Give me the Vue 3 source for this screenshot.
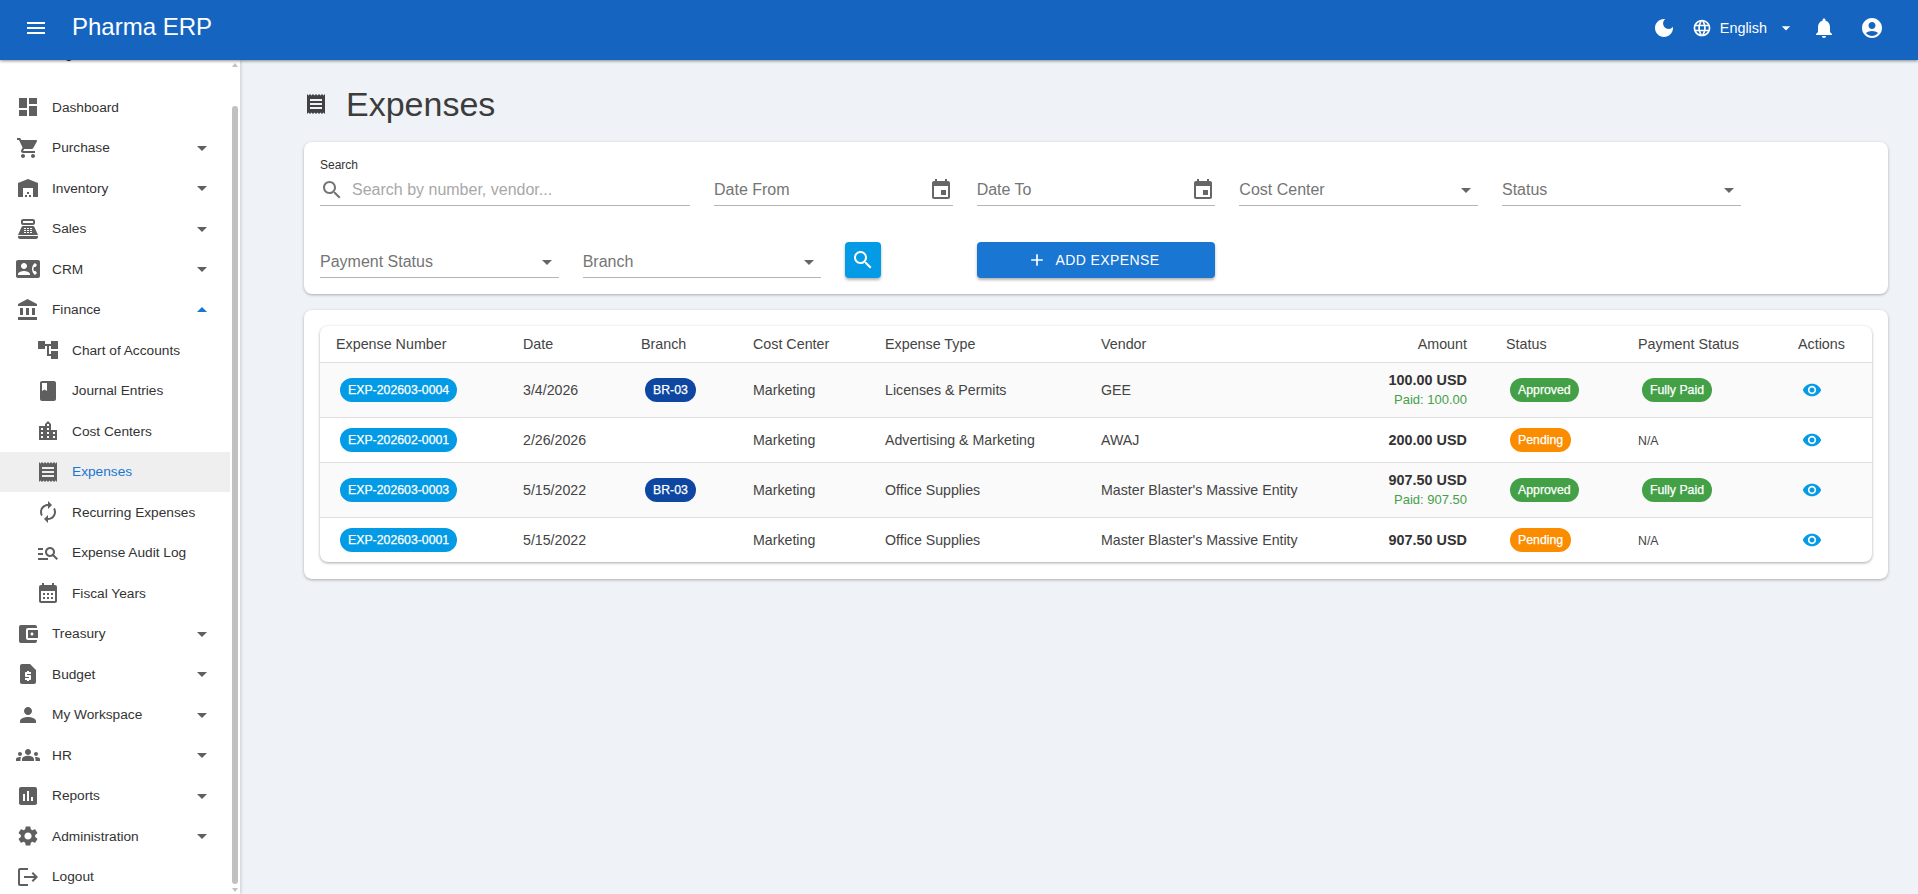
<script setup>
const P = {
  menu: 'M3 18h18v-2H3v2zm0-5h18v-2H3v2zm0-7v2h18V6H3z',
  dashboard: 'M3 13h8V3H3v10zm0 8h8v-6H3v6zm10 0h8V11h-8v10zm0-18v6h8V3h-8z',
  cart: 'M7 18c-1.1 0-1.99.9-1.99 2S5.9 22 7 22s2-.9 2-2-.9-2-2-2zM1 2v2h2l3.6 7.59-1.35 2.45c-.16.28-.25.61-.25.96 0 1.1.9 2 2 2h12v-2H7.42c-.14 0-.25-.11-.25-.25l.03-.12.9-1.63h7.45c.75 0 1.41-.41 1.75-1.03l3.58-6.49c.08-.14.12-.31.12-.48 0-.55-.45-1-1-1H5.21l-.94-2H1zm16 16c-1.1 0-1.99.9-1.99 2s.89 2 1.99 2 2-.9 2-2-.9-2-2-2z',
  warehouse: 'M22 21V7L12 3 2 7v14h5v-9h10v9h5zm-11-2H9v2h2v-2zm2-3h-2v2h2v-2zm2 3h-2v2h2v-2z',
  pos: 'M17 2H7c-1.1 0-2 .9-2 2v2c0 1.1.9 2 2 2h10c1.1 0 2-.9 2-2V4c0-1.1-.9-2-2-2zm0 4H7V4h10v2zm3 16H4c-1.1 0-2-.9-2-2v-1h20v1c0 1.1-.9 2-2 2zM18.53 10.19C18.21 9.47 17.49 9 16.7 9H7.3c-.79 0-1.51.47-1.83 1.19L2 18h20l-3.47-7.81zM8 11h2v1H8zm0 2h2v1H8zm0 2h2v1H8zm3-4h2v1h-2zm0 2h2v1h-2zm0 2h2v1h-2zm3-4h2v1h-2zm0 2h2v1h-2zm0 2h2v1h-2z',
  contact: 'M22 3H2C.9 3 0 3.9 0 5v14c0 1.1.9 2 2 2h20c1.1 0 1.99-.9 1.99-2L24 5c0-1.1-.9-2-2-2zM8 6c1.66 0 3 1.34 3 3s-1.34 3-3 3-3-1.34-3-3 1.34-3 3-3zm6 12H2v-1c0-2 4-3.1 6-3.1s6 1.1 6 3.1v1zm3.85-4h1.64L21 16l-1.99 1.99c-1.31-.98-2.28-2.38-2.73-3.99-.18-.64-.28-1.31-.28-2s.1-1.36.28-2c.45-1.62 1.42-3.01 2.73-3.99L21 8l-1.51 2h-1.64c-.22.63-.35 1.3-.35 2s.13 1.37.35 2z',
  bank: 'M4 10v7h3v-7H4zm6 0v7h3v-7h-3zM2 22h19v-3H2v3zm14-12v7h3v-7h-3zm-4.5-9L2 6v2h19V6l-9.5-5z',
  tree: 'M22 11V3h-7v3H9V3H2v8h7V8h2v10h4v3h7v-8h-7v3h-2V8h2v3z',
  book: 'M18 2H6c-1.1 0-2 .9-2 2v16c0 1.1.9 2 2 2h12c1.1 0 2-.9 2-2V4c0-1.1-.9-2-2-2zM6 4h5v8l-2.5-1.5L6 12V4z',
  city: 'M15 11V5l-3-3-3 3v2H3v14h18V11h-6zm-8 8H5v-2h2v2zm0-4H5v-2h2v2zm0-4H5V9h2v2zm6 8h-2v-2h2v2zm0-4h-2v-2h2v2zm0-4h-2V9h2v2zm0-4h-2V5h2v2zm6 12h-2v-2h2v2zm0-4h-2v-2h2v2z',
  receipt: 'M18 17H6v-2h12v2zm0-4H6v-2h12v2zm0-4H6V7h12v2zM3 22l1.5-1.5L6 22l1.5-1.5L9 22l1.5-1.5L12 22l1.5-1.5L15 22l1.5-1.5L18 22l1.5-1.5L21 22V2l-1.5 1.5L18 2l-1.5 1.5L15 2l-1.5 1.5L12 2l-1.5 1.5L9 2 7.5 3.5 6 2 4.5 3.5 3 2v20z',
  renew: 'M12 6v3l4-4-4-4v3c-4.42 0-8 3.58-8 8 0 1.57.46 3.03 1.24 4.26L6.7 14.8c-.45-.83-.7-1.79-.7-2.8 0-3.31 2.69-6 6-6zm6.76 1.74L17.3 9.2c.44.84.7 1.79.7 2.8 0 3.31-2.69 6-6 6v-3l-4 4 4 4v-3c4.42 0 8-3.58 8-8 0-1.57-.46-3.03-1.24-4.26z',
  audit: 'M7 9H2V7h5v2zm0 3H2v2h5v-2zm13.59 7l-3.83-3.83c-.8.52-1.74.83-2.76.83-2.76 0-5-2.24-5-5s2.24-5 5-5 5 2.24 5 5c0 1.02-.31 1.96-.83 2.75L22 17.59 20.59 19zM17 11c0-1.65-1.35-3-3-3s-3 1.35-3 3 1.35 3 3 3 3-1.35 3-3zM2 19h10v-2H2v2z',
  calmonth: 'M19 4h-1V2h-2v2H8V2H6v2H5c-1.1 0-2 .9-2 2v14c0 1.1.9 2 2 2h14c1.1 0 2-.9 2-2V6c0-1.1-.9-2-2-2zm0 16H5V10h14v10zM9 14H7v-2h2v2zm4 0h-2v-2h2v2zm4 0h-2v-2h2v2zm-8 4H7v-2h2v2zm4 0h-2v-2h2v2zm4 0h-2v-2h2v2z',
  wallet: 'M21 18v1c0 1.1-.9 2-2 2H5c-1.11 0-2-.9-2-2V5c0-1.1.89-2 2-2h14c1.1 0 2 .9 2 2v1h-9c-1.11 0-2 .9-2 2v8c0 1.1.89 2 2 2h9zm-9-2h10V8H12v8zm4-2.5c-.83 0-1.5-.67-1.5-1.5s.67-1.5 1.5-1.5 1.5.67 1.5 1.5-.67 1.5-1.5 1.5z',
  quote: 'M14 2H6c-1.1 0-1.99.9-1.99 2L4 20c0 1.1.89 2 1.99 2H18c1.1 0 2-.9 2-2V8l-6-6zm1 10h-4v1h3c.55 0 1 .45 1 1v3c0 .55-.45 1-1 1h-1v1h-2v-1H9v-2h4v-1h-3c-.55 0-1-.45-1-1v-3c0-.55.45-1 1-1h1V9h2v1h2v2z',
  person: 'M12 12c2.21 0 4-1.79 4-4s-1.79-4-4-4-4 1.79-4 4 1.79 4 4 4zm0 2c-2.67 0-8 1.34-8 4v2h16v-2c0-2.66-5.33-4-8-4z',
  groups: 'M12 12.75c1.63 0 3.07.39 4.24.9 1.08.48 1.76 1.56 1.76 2.73V18H6v-1.61c0-1.18.68-2.26 1.76-2.73 1.17-.52 2.61-.91 4.24-.91zM4 13c1.1 0 2-.9 2-2s-.9-2-2-2-2 .9-2 2 .9 2 2 2zm1.13 1.1c-.37-.06-.74-.1-1.13-.1-.99 0-1.93.21-2.78.58C.48 14.9 0 15.62 0 16.43V18h4.5v-1.61c0-.83.23-1.61.63-2.29zM20 13c1.1 0 2-.9 2-2s-.9-2-2-2-2 .9-2 2 .9 2 2 2zm4 3.43c0-.81-.48-1.53-1.22-1.85-.85-.37-1.79-.58-2.78-.58-.39 0-.76.04-1.13.1.4.68.63 1.46.63 2.29V18H24v-1.57zM12 6c1.66 0 3 1.34 3 3s-1.34 3-3 3-3-1.34-3-3 1.34-3 3-3z',
  assess: 'M19 3H5c-1.1 0-2 .9-2 2v14c0 1.1.9 2 2 2h14c1.1 0 2-.9 2-2V5c0-1.1-.9-2-2-2zM9 17H7v-7h2v7zm4 0h-2V7h2v10zm4 0h-2v-4h2v4z',
  settings: 'M19.14 12.94c.04-.3.06-.61.06-.94 0-.32-.02-.64-.07-.94l2.03-1.58c.18-.14.23-.41.12-.61l-1.92-3.32c-.12-.22-.37-.29-.59-.22l-2.39.96c-.5-.38-1.03-.7-1.62-.94l-.36-2.54c-.04-.24-.24-.41-.48-.41h-3.84c-.24 0-.43.17-.47.41l-.36 2.54c-.59.24-1.13.57-1.62.94l-2.39-.96c-.22-.08-.47 0-.59.22L2.74 8.87c-.12.21-.08.47.12.61l2.03 1.58c-.05.3-.09.63-.09.94s.02.64.07.94l-2.03 1.58c-.18.14-.23.41-.12.61l1.92 3.32c.12.22.37.29.59.22l2.39-.96c.5.38 1.03.7 1.62.94l.36 2.54c.05.24.24.41.48.41h3.84c.24 0 .44-.17.47-.41l.36-2.54c.59-.24 1.13-.56 1.62-.94l2.39.96c.22.08.47 0 .59-.22l1.92-3.32c.12-.22.07-.47-.12-.61l-2.01-1.58zM12 15.6c-1.98 0-3.6-1.62-3.6-3.6s1.62-3.6 3.6-3.6 3.6 1.62 3.6 3.6-1.62 3.6-3.6 3.6z',
  logout: 'M17 7l-1.41 1.41L18.17 11H8v2h10.17l-2.58 2.58L17 17l5-5zM4 5h8V3H4c-1.1 0-2 .9-2 2v14c0 1.1.9 2 2 2h8v-2H4V5z',
  search: 'M15.5 14h-.79l-.28-.27C15.41 12.59 16 11.11 16 9.5 16 5.91 13.09 3 9.5 3S3 5.91 3 9.5 5.91 16 9.5 16c1.61 0 3.09-.59 4.23-1.57l.27.28v.79l5 4.99L20.49 19l-4.99-5zm-6 0C7.01 14 5 11.99 5 9.5S7.01 5 9.5 5 14 7.01 14 9.5 11.99 14 9.5 14z',
  event: 'M17 12h-5v5h5v-5zM16 1v2H8V1H6v2H5c-1.11 0-1.99.9-1.99 2L3 19c0 1.1.89 2 2 2h14c1.1 0 2-.9 2-2V5c0-1.1-.9-2-2-2h-1V1h-2zm3 18H5V8h14v11z',
  plus: 'M19 13h-6v6h-2v-6H5v-2h6V5h2v6h6v2z',
  down: 'M7 10l5 5 5-5z',
  up: 'M7 14l5-5 5 5z',
  eye: 'M12 4.5C7 4.5 2.73 7.61 1 12c1.73 4.39 6 7.5 11 7.5s9.27-3.11 11-7.5c-1.73-4.39-6-7.5-11-7.5zM12 17c-2.76 0-5-2.24-5-5s2.24-5 5-5 5 2.24 5 5-2.24 5-5 5zm0-8c-1.66 0-3 1.34-3 3s1.34 3 3 3 3-1.34 3-3-1.34-3-3-3z',
  moon: 'M12 3c-4.97 0-9 4.03-9 9s4.03 9 9 9 9-4.03 9-9c0-.46-.04-.92-.1-1.36-.98 1.37-2.58 2.26-4.4 2.26-2.98 0-5.4-2.42-5.4-5.4 0-1.81.89-3.42 2.26-4.4-.44-.06-.9-.1-1.36-.1z',
  globe: 'M11.99 2C6.47 2 2 6.48 2 12s4.47 10 9.99 10C17.52 22 22 17.52 22 12S17.52 2 11.99 2zm6.93 6h-2.95c-.32-1.25-.78-2.45-1.38-3.56 1.84.63 3.37 1.91 4.33 3.56zM12 4.04c.83 1.2 1.48 2.53 1.91 3.96h-3.82c.43-1.43 1.08-2.76 1.91-3.96zM4.26 14C4.1 13.36 4 12.69 4 12s.1-1.36.26-2h3.38c-.08.66-.14 1.32-.14 2 0 .68.06 1.34.14 2H4.26zm.82 2h2.95c.32 1.25.78 2.45 1.38 3.56-1.84-.63-3.37-1.9-4.33-3.56zm2.95-8H5.08c.96-1.66 2.49-2.93 4.33-3.56C8.81 5.55 8.35 6.75 8.03 8zM12 19.96c-.83-1.2-1.48-2.53-1.91-3.96h3.82c-.43 1.43-1.08 2.76-1.91 3.96zM14.34 14H9.66c-.09-.66-.16-1.32-.16-2 0-.68.07-1.35.16-2h4.68c.09.65.16 1.32.16 2 0 .68-.07 1.34-.16 2zm.25 5.56c.6-1.11 1.06-2.31 1.38-3.56h2.95c-.96 1.65-2.49 2.93-4.33 3.56zM16.36 14c.08-.66.14-1.32.14-2 0-.68-.06-1.34-.14-2h3.38c.16.64.26 1.31.26 2s-.1 1.36-.26 2h-3.38z',
  bell: 'M12 22c1.1 0 2-.9 2-2h-4c0 1.1.89 2 2 2zm6-6v-5c0-3.07-1.64-5.64-4.5-6.32V4c0-.83-.67-1.5-1.5-1.5s-1.5.67-1.5 1.5v.68C7.63 5.36 6 7.92 6 11v5l-2 2v1h16v-1l-2-2z',
  account: 'M12 2C6.48 2 2 6.48 2 12s4.48 10 10 10 10-4.48 10-10S17.52 2 12 2zm0 4c1.93 0 3.5 1.57 3.5 3.5S13.93 13 12 13s-3.5-1.57-3.5-3.5S10.07 6 12 6zm0 14c-2.03 0-4.43-.82-6.14-2.88C7.55 15.8 9.68 15 12 15s4.45.8 6.14 2.12C16.43 19.18 14.03 20 12 20z'
}

const menu = [
  { label: 'Dashboard', icon: 'dashboard' },
  { label: 'Purchase', icon: 'cart', arrow: 'down' },
  { label: 'Inventory', icon: 'warehouse', arrow: 'down' },
  { label: 'Sales', icon: 'pos', arrow: 'down' },
  { label: 'CRM', icon: 'contact', arrow: 'down' },
  { label: 'Finance', icon: 'bank', arrow: 'up' },
  { label: 'Chart of Accounts', icon: 'tree', sub: true },
  { label: 'Journal Entries', icon: 'book', sub: true },
  { label: 'Cost Centers', icon: 'city', sub: true },
  { label: 'Expenses', icon: 'receipt', sub: true, active: true },
  { label: 'Recurring Expenses', icon: 'renew', sub: true },
  { label: 'Expense Audit Log', icon: 'audit', sub: true },
  { label: 'Fiscal Years', icon: 'calmonth', sub: true },
  { label: 'Treasury', icon: 'wallet', arrow: 'down' },
  { label: 'Budget', icon: 'quote', arrow: 'down' },
  { label: 'My Workspace', icon: 'person', arrow: 'down' },
  { label: 'HR', icon: 'groups', arrow: 'down' },
  { label: 'Reports', icon: 'assess', arrow: 'down' },
  { label: 'Administration', icon: 'settings', arrow: 'down' },
  { label: 'Logout', icon: 'logout' }
]

const filtersTop = [
  { label: 'Date From', icon: 'event' },
  { label: 'Date To', icon: 'event' },
  { label: 'Cost Center', icon: 'down' },
  { label: 'Status', icon: 'down' }
]

const columns = ['Expense Number', 'Date', 'Branch', 'Cost Center', 'Expense Type', 'Vendor', 'Amount', 'Status', 'Payment Status', 'Actions']

const rows = [
  { no: 'EXP-202603-0004', date: '3/4/2026', branch: 'BR-03', type: 'Licenses & Permits', vendor: 'GEE', amount: '100.00 USD', paid: 'Paid: 100.00', status: 'Approved', pay: 'Fully Paid' },
  { no: 'EXP-202602-0001', date: '2/26/2026', branch: '', type: 'Advertising & Marketing', vendor: 'AWAJ', amount: '200.00 USD', paid: '', status: 'Pending', pay: 'N/A' },
  { no: 'EXP-202603-0003', date: '5/15/2022', branch: 'BR-03', type: 'Office Supplies', vendor: "Master Blaster's Massive Entity", amount: '907.50 USD', paid: 'Paid: 907.50', status: 'Approved', pay: 'Fully Paid' },
  { no: 'EXP-202603-0001', date: '5/15/2022', branch: '', type: 'Office Supplies', vendor: "Master Blaster's Massive Entity", amount: '907.50 USD', paid: '', status: 'Pending', pay: 'N/A' }
]
</script>

<template>
  <div class="app">
    <header class="topbar">
      <svg class="i24 burger" viewBox="0 0 24 24"><path :d="P.menu" /></svg>
      <div class="brand">Pharma ERP</div>
      <div class="top-actions">
        <svg class="i24 moon" viewBox="0 0 24 24"><path :d="P.moon" /></svg>
        <div class="lang">
          <svg class="i20" viewBox="0 0 24 24"><path :d="P.globe" /></svg>
          <span class="lang-text">English</span>
          <svg class="i20 lang-arrow" viewBox="0 0 24 24"><path :d="P.down" /></svg>
        </div>
        <svg class="i24 bell" viewBox="0 0 24 24"><path :d="P.bell" /></svg>
        <svg class="i24 acct" viewBox="0 0 24 24"><path :d="P.account" /></svg>
      </div>
    </header>

    <div class="body">
      <aside class="sidebar">
        <nav class="nav">
          <div class="peek">Navigation</div>
          <div v-for="m in menu" :key="m.label" class="item" :class="{ sub: m.sub, active: m.active }">
            <svg class="i24 item-icon" viewBox="0 0 24 24"><path :d="P[m.icon]" /></svg>
            <span class="item-label">{{ m.label }}</span>
            <svg v-if="m.arrow" class="i24 item-arrow" :class="{ open: m.arrow === 'up' }" viewBox="0 0 24 24"><path :d="P[m.arrow]" /></svg>
          </div>
        </nav>
        <div class="rail">
          <span class="rail-up"></span>
          <span class="rail-thumb"></span>
          <span class="rail-down"></span>
        </div>
      </aside>

      <main class="main">
        <div class="title-row">
          <svg class="i24 title-icon" viewBox="0 0 24 24"><path :d="P.receipt" /></svg>
          <h1 class="title">Expenses</h1>
        </div>

        <section class="card filters">
          <div class="field span3 search-field">
            <label class="field-label">Search</label>
            <div class="control">
              <svg class="i24 search-icon" viewBox="0 0 24 24"><path :d="P.search" /></svg>
              <span class="placeholder">Search by number, vendor...</span>
            </div>
          </div>
          <div v-for="f in filtersTop" :key="f.label" class="field span2">
            <div class="control">
              <span class="value">{{ f.label }}</span>
              <svg class="i24 ctl-icon" viewBox="0 0 24 24"><path :d="P[f.icon]" /></svg>
            </div>
          </div>
          <div class="field span2">
            <div class="control">
              <span class="value">Payment Status</span>
              <svg class="i24 ctl-icon" viewBox="0 0 24 24"><path :d="P.down" /></svg>
            </div>
          </div>
          <div class="field span2">
            <div class="control">
              <span class="value">Branch</span>
              <svg class="i24 ctl-icon" viewBox="0 0 24 24"><path :d="P.down" /></svg>
            </div>
          </div>
          <div class="btn-cell">
            <button class="icon-btn">
              <svg class="i24" viewBox="0 0 24 24"><path :d="P.search" /></svg>
            </button>
          </div>
          <div class="btn-cell span2">
            <button class="add-btn">
              <svg class="i20" viewBox="0 0 24 24"><path :d="P.plus" /></svg>
              <span>ADD EXPENSE</span>
            </button>
          </div>
        </section>

        <section class="card table-card">
          <div class="table-inner">
            <table class="table">
              <colgroup>
                <col class="c1" /><col class="c2" /><col class="c3" /><col class="c4" /><col class="c5" />
                <col class="c6" /><col class="c7" /><col class="c8" /><col class="c9" /><col class="c10" />
              </colgroup>
              <thead>
                <tr>
                  <th v-for="c in columns" :key="c" :class="{ right: c === 'Amount' }">{{ c }}</th>
                </tr>
              </thead>
              <tbody>
                <tr v-for="(r, i) in rows" :key="r.no" :class="{ odd: i % 2 === 0, tall: r.paid }">
                  <td><span class="pill blue">{{ r.no }}</span></td>
                  <td>{{ r.date }}</td>
                  <td><span v-if="r.branch" class="pill navy">{{ r.branch }}</span></td>
                  <td>Marketing</td>
                  <td>{{ r.type }}</td>
                  <td>{{ r.vendor }}</td>
                  <td class="right">
                    <div class="amount">{{ r.amount }}</div>
                    <div v-if="r.paid" class="paid">{{ r.paid }}</div>
                  </td>
                  <td><span class="pill" :class="r.status === 'Approved' ? 'green' : 'orange'">{{ r.status }}</span></td>
                  <td>
                    <span v-if="r.pay !== 'N/A'" class="pill green">{{ r.pay }}</span>
                    <span v-else class="na">N/A</span>
                  </td>
                  <td><svg class="i20 eye" viewBox="0 0 24 24"><path :d="P.eye" /></svg></td>
                </tr>
              </tbody>
            </table>
          </div>
        </section>
      </main>
    </div>
  </div>
</template>

<style>
html, body { margin: 0; background: #eff3f8; }
</style>

<style scoped>
.app {
  width: 1918px;
  height: 894px;
  overflow: hidden;
  display: flex;
  flex-direction: column;
  font-family: "Liberation Sans", Arial, sans-serif;
  background: #eff3f8;
  color: #333;
}
.i24 { width: 24px; height: 24px; fill: currentColor; flex: none; display: block; }
.i20 { width: 20px; height: 20px; fill: currentColor; flex: none; display: block; }

.topbar {
  height: 60px;
  flex: none;
  box-sizing: border-box;
  background: #1565c0;
  color: #fff;
  display: flex;
  align-items: center;
  padding: 0 34px 4px 24px;
  box-shadow: 0 1px 3px rgba(0, 0, 0, 0.45);
  position: relative;
  z-index: 2;
}
.brand { margin: 0 0 2px 24px; font-size: 24px; line-height: 28px; }
.top-actions { margin-left: auto; display: flex; align-items: center; }
.moon { margin-right: 16px; }
.lang { display: flex; align-items: center; }
.lang-text { font-size: 14.4px; margin-left: 8px; }
.lang-arrow { margin-left: 9px; }
.bell { margin-left: 16px; }
.acct { margin-left: 24px; }

.body { flex: 1; display: flex; min-height: 0; }

.sidebar {
  width: 240px;
  flex: none;
  display: flex;
  background: #fff;
  box-shadow: 1px 0 3px rgba(0, 0, 0, 0.16);
  overflow: hidden;
  position: relative;
}
.nav { width: 230px; flex: none; display: flex; flex-direction: column; }
.peek { height: 44px; flex: none; margin-top: -17px; padding-left: 37px; font-size: 14px; line-height: 20px; color: #333; }
.item {
  height: 40.5px;
  flex: none;
  display: flex;
  align-items: center;
  padding-left: 16px;
  color: #5f5f5f;
}
.item.sub { padding-left: 36px; }
.item.active { background: #efefef; }
.item-label { margin-left: 12px; font-size: 13.7px; color: #333; white-space: nowrap; }
.item.active .item-label { color: #1976d2; }
.item-arrow { margin-left: auto; margin-right: 16px; }
.item-arrow.open { color: #1976d2; }

.rail { width: 10px; flex: none; position: relative; background: #fff; }
.rail-thumb { position: absolute; left: 2px; top: 46px; width: 6px; height: 778px; background: #c1c1c1; border-radius: 3px; }
.rail-up { position: absolute; left: 2px; top: 3px; border: 3px solid transparent; border-bottom: 4px solid #c1c1c1; border-top: 0; }
.rail-down { position: absolute; left: 2px; bottom: 2px; border: 3px solid transparent; border-top: 4px solid #c1c1c1; border-bottom: 0; }

.main { flex: 1; min-width: 0; padding: 0 30px 0 64px; }
.title-row { height: 82px; display: flex; align-items: center; }
.title-icon { color: #424242; margin-top: 5px; }
.title { margin: 6px 0 0 18px; font-size: 34px; font-weight: 400; color: #3c3c3c; line-height: 40px; }

.card {
  background: #fff;
  border-radius: 8px;
  box-shadow: 0 1px 3px rgba(0, 0, 0, 0.3);
}
.filters {
  height: 152px;
  box-sizing: border-box;
  padding: 0 16px;
  display: grid;
  grid-template-columns: repeat(12, 1fr);
  column-gap: 24px;
  grid-template-rows: 64px 72px;
}
.field { position: relative; align-self: end; border-bottom: 1px solid #b5b5b5; height: 34px; }
.span3 { grid-column: span 3; }
.span2 { grid-column: span 2; }
.control { height: 33px; box-sizing: border-box; padding-top: 4px; display: flex; align-items: center; }
.field-label { position: absolute; left: 0; top: -14px; font-size: 12px; color: #333; line-height: 16px; }
.search-icon { color: #757575; margin-right: 8px; }
.placeholder { font-size: 16px; color: #a8a8a8; white-space: nowrap; }
.value { font-size: 16px; color: #757575; white-space: nowrap; }
.ctl-icon { margin-left: auto; color: #666; }
.btn-cell { align-self: end; }
.btn-cell.span2 { grid-column: 6 / span 2; }
.icon-btn {
  width: 36px;
  height: 36px;
  border: 0;
  padding: 0;
  border-radius: 4px;
  background: #039be5;
  color: #fff;
  display: flex;
  align-items: center;
  justify-content: center;
  box-shadow: 0 2px 3px rgba(0, 0, 0, 0.3);
}
.add-btn {
  width: 100%;
  height: 36px;
  border: 0;
  padding: 0 5px 0 0;
  border-radius: 4px;
  background: #1976d2;
  color: #fff;
  display: flex;
  align-items: center;
  justify-content: center;
  gap: 8px;
  font-family: inherit;
  font-size: 14px;
  letter-spacing: 0.4px;
  box-shadow: 0 2px 3px rgba(0, 0, 0, 0.3);
}

.table-card { margin-top: 16px; padding: 16px; height: 269px; box-sizing: border-box; }
.table-inner {
  border-radius: 8px;
  box-shadow: 0 1px 3px rgba(0, 0, 0, 0.35);
  overflow: hidden;
  background: #fff;
}
.table { width: 100%; table-layout: fixed; border-collapse: collapse; font-size: 14.2px; color: #444; }
.c1 { width: 187px; }
.c2 { width: 118px; }
.c3 { width: 112px; }
.c4 { width: 132px; }
.c5 { width: 216px; }
.c6 { width: 278px; }
.c7 { width: 127px; }
.c8 { width: 132px; }
.c9 { width: 160px; }
.c10 { width: 90px; }
th {
  height: 36px;
  padding: 0 16px;
  text-align: left;
  font-size: 14.3px;
  font-weight: 400;
  color: #444;
  border-bottom: 1px solid #e0e0e0;
  white-space: nowrap;
}
td {
  height: 44px;
  padding: 0 16px;
  border-bottom: 1px solid #e0e0e0;
  white-space: nowrap;
}
tr.tall td { height: 54px; }
tbody tr:last-child td { border-bottom: 0; }
tr.odd td { background: #fafafa; }
th.right, td.right { text-align: right; padding-right: 23px; }
.pill {
  display: inline-block;
  height: 24px;
  line-height: 24px;
  padding: 0 8px;
  margin-left: 4px;
  border-radius: 12px;
  font-size: 12.3px;
  color: #fff;
  -webkit-text-stroke: 0.25px #fff;
  vertical-align: middle;
}
.pill.blue { background: #039be5; }
.pill.navy { background: #0d47a1; }
.pill.green { background: #43a047; }
.pill.orange { background: #fb8c00; }
.amount { font-weight: 700; font-size: 14.4px; color: #333; line-height: 20px; }
.paid { font-size: 13px; color: #43a047; line-height: 20px; }
.na { font-size: 12.3px; color: #444; }
.eye { color: #039be5; margin-left: 4px; }
</style>
